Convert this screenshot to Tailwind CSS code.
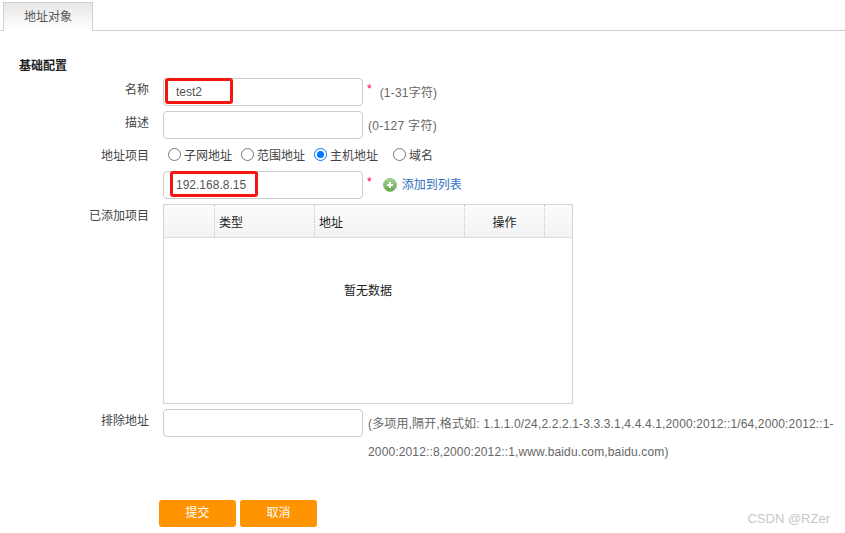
<!DOCTYPE html>
<html lang="zh">
<head>
  <meta charset="UTF-8" />
  <title>地址对象</title>
  <script src="https://cdn.jsdelivr.net/npm/@tailwindcss/browser@4"></script>
</head>
<body class="bg-white text-[12px] text-[#333] font-['Liberation_Sans','Noto_Sans_CJK_SC',sans-serif] w-[845px] h-[533px] overflow-hidden relative">

  <!-- tab bar -->
  <div class="h-[31px] pt-[2px] pl-[3px] border-b border-[#d0d0d0]">
    <div class="w-[90px] h-[29px] border border-b-0 border-[#d0d0d0] bg-gradient-to-b from-[#e8e8e8] to-white flex items-center justify-center text-[#555]">地址对象</div>
  </div>

  <div class="pl-[19px] pt-[27px] h-[47px] font-bold text-[#222] leading-[16px]">基础配置</div>

  <!-- name -->
  <div class="flex h-[33px]">
    <div class="w-[149px] text-right leading-[24px] text-[#444]">名称</div>
    <div class="relative ml-[14px] w-[200px] h-[28px] border border-[#ccc] rounded-[4px] pl-[12px] leading-[26px] text-[#555]">test2
      <div class="absolute left-[1px] top-[-1px] w-[68px] h-[26px] border-[3px] border-[#f5160f] rounded-[3px]"></div>
    </div>
    <span class="ml-[4px] text-[#f03] leading-[22px]">*</span>
    <span class="ml-[8px] leading-[30px] text-[#666] tracking-[0.2px]">(1-31字符)</span>
  </div>

  <!-- description -->
  <div class="flex h-[33px]">
    <div class="w-[149px] text-right leading-[24px] text-[#444]">描述</div>
    <div class="ml-[14px] w-[200px] h-[28px] border border-[#ccc] rounded-[4px]"></div>
    <span class="ml-[5px] leading-[30px] text-[#666] tracking-[0.3px]">(0-127 字符)</span>
  </div>

  <!-- address type -->
  <div class="flex h-[27px] items-start">
    <div class="w-[149px] text-right leading-[24px] text-[#444]">地址项目</div>
    <div class="ml-[19px] flex items-center h-[23px] text-[#444]">
      <span class="w-[13px] h-[13px] mt-[-2px] rounded-full border border-[#777] bg-white"></span>
      <span class="ml-[3px]">子网地址</span>
      <span class="ml-[9px] w-[13px] h-[13px] mt-[-2px] rounded-full border border-[#777] bg-white"></span>
      <span class="ml-[3px]">范围地址</span>
      <span class="ml-[9px] w-[13px] h-[13px] mt-[-2px] rounded-full border border-[#0075ff] flex items-center justify-center"><span class="w-[7px] h-[7px] rounded-full bg-[#0075ff]"></span></span>
      <span class="ml-[3px]">主机地址</span>
      <span class="ml-[15px] w-[13px] h-[13px] mt-[-2px] rounded-full border border-[#777] bg-white"></span>
      <span class="ml-[3px]">域名</span>
    </div>
  </div>

  <!-- address input -->
  <div class="flex h-[33px]">
    <div class="w-[149px]"></div>
    <div class="relative ml-[14px] w-[200px] h-[28px] border border-[#ccc] rounded-[4px] pl-[12px] leading-[26px] text-[#555]">192.168.8.15
      <div class="absolute left-[6px] top-[-1px] w-[88px] h-[26px] border-[3px] border-[#f5160f] rounded-[3px]"></div>
    </div>
    <span class="ml-[4px] text-[#f03] leading-[22px]">*</span>
    <div class="ml-[11px] flex items-center h-[28px]">
      <svg width="14" height="14" viewBox="0 0 14 14"><defs><linearGradient id="plus" x1="0" y1="0" x2="0" y2="1"><stop offset="0" stop-color="#a9d495"/><stop offset="1" stop-color="#62a548"/></linearGradient></defs><circle cx="7" cy="7" r="6.5" fill="url(#plus)" stroke="#8fc57a"/><path d="M7 4v6M4 7h6" stroke="#fff" stroke-width="2"/></svg>
      <span class="ml-[5px] text-[#2f6fbf]">添加到列表</span>
    </div>
  </div>

  <!-- table -->
  <div class="flex h-[205px]">
    <div class="w-[149px] text-right leading-[24px] text-[#444]">已添加项目</div>
    <div class="ml-[14px] w-[410px] h-[200px] border border-[#d4d4d4]">
      <div class="flex h-[33px] border-b border-[#dcdcdc] bg-gradient-to-b from-[#fcfcfc] to-[#f3f3f3] text-[#222] leading-[37px]">
        <div class="w-[51px] border-r border-dotted border-[#c8c8c8]"></div>
        <div class="w-[100px] pl-[4px] border-r border-dotted border-[#c8c8c8]">类型</div>
        <div class="w-[150px] pl-[4px] border-r border-dotted border-[#c8c8c8]">地址</div>
        <div class="w-[80px] text-center border-r border-dotted border-[#c8c8c8]">操作</div>
      </div>
      <div class="h-[105px] flex items-center justify-center text-[#222]">暂无数据</div>
    </div>
  </div>

  <!-- excluded -->
  <div class="flex h-[91px]">
    <div class="w-[149px] text-right leading-[24px] text-[#444]">排除地址</div>
    <div class="ml-[14px] w-[200px] h-[28px] border border-[#ccc] rounded-[4px] shrink-0"></div>
    <div class="ml-[5px] w-[475px] pt-[1px] leading-[28px] text-[#666] tracking-[0.14px] whitespace-nowrap">(多项用,隔开,格式如: 1.1.1.0/24,2.2.2.1-3.3.3.1,4.4.4.1,2000:2012::1/64,2000:2012::1-<br>2000:2012::8,2000:2012::1,www.baidu.com,baidu.com)</div>
  </div>

  <!-- buttons -->
  <div class="flex gap-[4px] pl-[159px]">
    <div class="w-[77px] h-[27px] rounded-[3px] bg-[#ff9300] text-white text-center leading-[27px]">提交</div>
    <div class="w-[77px] h-[27px] rounded-[3px] bg-[#ff9300] text-white text-center leading-[27px]">取消</div>
  </div>

  <div class="absolute right-[15px] top-[509px] text-[13px] text-[#c8c8c8]">CSDN @RZer</div>
</body>
</html>
